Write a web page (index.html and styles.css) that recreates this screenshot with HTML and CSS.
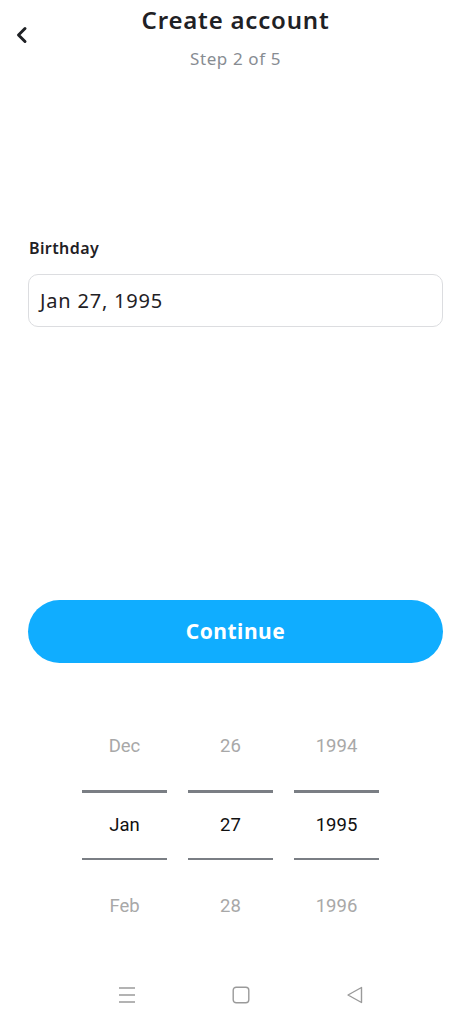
FILE: index.html
```html
<!DOCTYPE html>
<html lang="en">
	<head>
		<meta charset="UTF-8" />
		<meta name="viewport" content="width=device-width, initial-scale=1.0" />
		<title>Create account</title>
		<link rel="stylesheet" href="styles.css">
	</head>
	<body>
		<div class="page">
			<header class="top-bar">
				<button class="back-btn" aria-label="Back">
					<svg width="20" height="20" viewBox="0 0 20 20">
						<path d="M13 3.5 L6.5 10 L13 16.5" fill="none" stroke="#1f2125" stroke-width="3" stroke-linecap="round" stroke-linejoin="round" />
					</svg>
				</button>
				<div class="titles">
					<h1>Create account</h1>
					<p class="step">Step 2 of 5</p>
				</div>
			</header>

			<section class="form">
				<label class="field-label" for="birthday">Birthday</label>
				<div class="field" id="birthday">Jan 27, 1995</div>
			</section>

			<button class="continue-btn">Continue</button>

			<section class="picker">
				<div class="picker-col">
					<div class="picker-item dim">Dec</div>
					<div class="picker-line top"></div>
					<div class="picker-item selected">Jan</div>
					<div class="picker-line"></div>
					<div class="picker-item dim last">Feb</div>
				</div>
				<div class="picker-col">
					<div class="picker-item dim">26</div>
					<div class="picker-line top"></div>
					<div class="picker-item selected">27</div>
					<div class="picker-line"></div>
					<div class="picker-item dim last">28</div>
				</div>
				<div class="picker-col">
					<div class="picker-item dim">1994</div>
					<div class="picker-line top"></div>
					<div class="picker-item selected">1995</div>
					<div class="picker-line"></div>
					<div class="picker-item dim last">1996</div>
				</div>
			</section>

			<nav class="nav-bar">
				<svg width="18" height="18" viewBox="0 0 18 18">
					<path d="M1 2 H17 M1 9 H17 M1 16 H17" stroke="#9a9a9a" stroke-width="1.4" fill="none" />
				</svg>
				<svg width="18" height="18" viewBox="0 0 18 18">
					<rect x="1.2" y="1.2" width="15.6" height="15.6" rx="3" fill="none" stroke="#9a9a9a" stroke-width="1.4" />
				</svg>
				<svg width="18" height="18" viewBox="0 0 18 18">
					<path d="M15.5 1.5 L2 9 L15.5 16.5 Z" fill="none" stroke="#9a9a9a" stroke-width="1.4" stroke-linejoin="round" />
				</svg>
			</nav>
		</div>
	</body>
</html>
```

FILE: styles.css
```css
:root {
	--text-color: #1f2125;
	--muted-color: #878c92;
	--accent-color: #10adff;
	--border-color: #dcdde0;
	--picker-dim: #a8a8a8;
	--picker-line: #7a7e84;
	--font-family: 'Noto Sans', 'Liberation Sans', sans-serif;
}

body {
	margin: 0;
	background-color: #ffffff;
	font-family: var(--font-family);
	color: var(--text-color);
}

.page {
	width: 474px;
	height: 1024px;
	display: flex;
	flex-direction: column;
	overflow: hidden;
}

/* Шапка */
.top-bar {
	display: grid;
	grid-template-columns: 40px 1fr 40px;
	padding-top: 4px;
}

.back-btn {
	margin: 21px 0 0 12px;
	padding: 0;
	width: 20px;
	height: 20px;
	border: none;
	background: none;
	cursor: pointer;
}

.titles {
	text-align: center;
	margin-right: 3px;
}

.titles h1 {
	margin: 0;
	font-size: 24px;
	line-height: 32px;
	font-weight: 600;
	letter-spacing: 0.8px;
}

.step {
	margin: 11px 0 0 0;
	font-size: 17px;
	line-height: 24px;
	letter-spacing: 0.6px;
	color: var(--muted-color);
}

/* Поле даты */
.form {
	margin: 167px 31px 0 28px;
	display: flex;
	flex-direction: column;
}

.field-label {
	font-size: 16px;
	line-height: 20px;
	font-weight: 600;
	letter-spacing: 0.4px;
	margin-left: 1px;
}

.field {
	margin-top: 16px;
	height: 53px;
	box-sizing: border-box;
	border: 1px solid var(--border-color);
	border-radius: 10px;
	padding: 0 11px;
	display: flex;
	align-items: center;
	font-size: 20px;
	letter-spacing: 0.8px;
}

.continue-btn {
	margin: 273px 31px 0 28px;
	height: 63px;
	padding-bottom: 3px;
	border: none;
	border-radius: 32px;
	background-color: var(--accent-color);
	color: #ffffff;
	font-family: var(--font-family);
	font-size: 21px;
	font-weight: 700;
	letter-spacing: 0.5px;
	cursor: pointer;
}

/* Колесо выбора даты */
.picker {
	margin: 61px 0 0 82px;
	display: flex;
	gap: 21px;
	font-family: Roboto, sans-serif;
	font-size: 18.5px;
}

.picker-col {
	width: 85px;
	display: flex;
	flex-direction: column;
	text-align: center;
}

.picker-item {
	display: flex;
	align-items: center;
	justify-content: center;
}

.picker-item.dim {
	height: 44px;
	color: var(--picker-dim);
}

.picker-item.dim.last {
	height: 40px;
	margin-top: 26px;
}

.picker-item.selected {
	height: 65px;
	color: #111111;
}

.picker-line {
	height: 2.5px;
	background-color: var(--picker-line);
}

.picker-line.top {
	margin-top: 22px;
}

/* Системная навигация */
.nav-bar {
	margin-top: auto;
	height: 38px;
	padding: 15px 0 0 8px;
	display: flex;
	justify-content: center;
	align-items: flex-start;
	gap: 96px;
}
```
